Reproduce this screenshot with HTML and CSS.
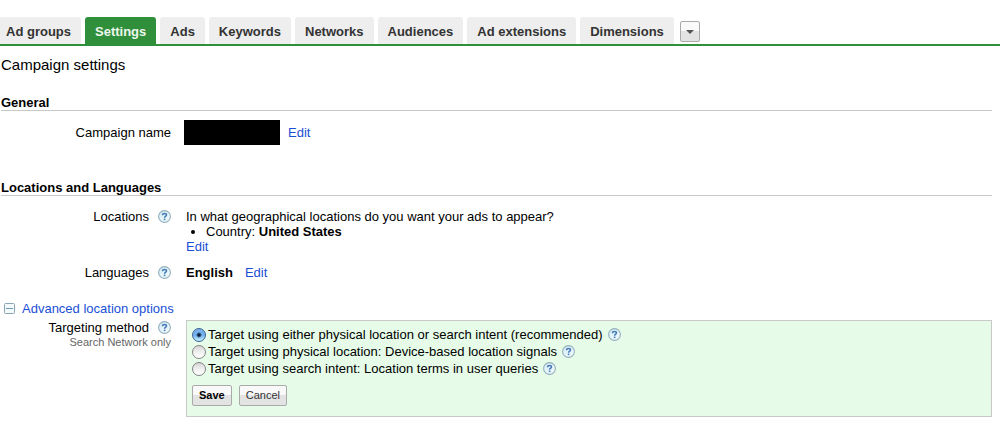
FILE: index.html
```html
<!DOCTYPE html>
<html lang="en">
<head>
<meta charset="utf-8">
<title>Campaign settings</title>
<link rel="stylesheet" href="styles.css">
</head>
<body>
<svg class="defs" aria-hidden="true">
  <defs>
    <linearGradient id="help-fill" x1="0" y1="0" x2="1" y2="1">
      <stop offset="0" stop-color="#d3edf6"/>
      <stop offset="1" stop-color="#f6fbfd"/>
    </linearGradient>
    <symbol id="help" viewBox="0 0 13 13">
      <circle cx="6.5" cy="6.5" r="5.9" fill="url(#help-fill)" stroke="#93afbb" stroke-width="1.1"/>
      <path d="M4.5 5.2C4.5 3.9 5.4 3.5 6.5 3.5S8.5 4 8.5 5C8.5 6.2 6.6 6.2 6.6 7.8" fill="none" stroke="#4679b8" stroke-width="1.5"/>
      <rect x="5.8" y="8.6" width="1.6" height="1.5" fill="#4679b8"/>
    </symbol>
  </defs>
</svg>
<nav class="tabs">
  <a class="tab tab-first" href="#">Ad groups</a>
  <a class="tab tab-active" href="#" aria-current="page">Settings</a>
  <a class="tab" href="#">Ads</a>
  <a class="tab" href="#">Keywords</a>
  <a class="tab" href="#">Networks</a>
  <a class="tab" href="#">Audiences</a>
  <a class="tab" href="#">Ad extensions</a>
  <a class="tab" href="#">Dimensions</a>
  <button class="btn more" type="button" aria-label="More tabs"><svg width="8" height="4" viewBox="0 0 8 4"><path d="M0 0H8L4 4Z" fill="#555"/></svg></button>
</nav>
<main class="page">
  <h1 class="title">Campaign settings</h1>

  <section class="general">
    <h2 class="heading">General</h2>
    <div class="row row-name">
      <div class="label">Campaign name</div>
      <div class="value value-name"><span class="redacted"></span><a class="link" href="#">Edit</a></div>
    </div>
  </section>

  <section>
    <h2 class="heading">Locations and Languages</h2>
    <div class="row row-locations">
      <div class="label">Locations <svg class="help"><use href="#help"/></svg></div>
      <div class="value">
        <p class="question">In what geographical locations do you want your ads to appear?</p>
        <ul class="places"><li>Country: <b>United States</b></li></ul>
        <a class="link" href="#">Edit</a>
      </div>
    </div>
    <div class="row row-languages">
      <div class="label">Languages <svg class="help"><use href="#help"/></svg></div>
      <div class="value value-inline"><b>English</b><a class="link" href="#">Edit</a></div>
    </div>
    <a class="link advanced" href="#"><svg width="11" height="11" viewBox="0 0 11 11"><rect x=".5" y=".5" width="10" height="10" rx="1" fill="#f4f9fb" stroke="#8aa5b4"/><path d="M2 5.5H9" stroke="#6b9cba"/></svg>Advanced location options</a>
    <div class="row">
      <div class="label-group">
        <div class="label">Targeting method <svg class="help"><use href="#help"/></svg></div>
        <div class="note">Search Network only</div>
      </div>
      <form class="panel">
        <div class="option"><input class="radio" type="radio" name="target" id="either" checked><label for="either">Target using either physical location or search intent (recommended)</label><svg class="help"><use href="#help"/></svg></div>
        <div class="option"><input class="radio" type="radio" name="target" id="physical"><label for="physical">Target using physical location: Device-based location signals</label><svg class="help"><use href="#help"/></svg></div>
        <div class="option"><input class="radio" type="radio" name="target" id="intent"><label for="intent">Target using search intent: Location terms in user queries</label><svg class="help"><use href="#help"/></svg></div>
        <div class="actions">
          <button class="btn save" type="button">Save</button>
          <button class="btn" type="button">Cancel</button>
        </div>
      </form>
    </div>
  </section>
</main>
</body>
</html>
```

FILE: styles.css
```css
* { box-sizing: border-box; }
body {
  margin: 0;
  background: #fff;
  color: #000;
  font: 13px/15px "Liberation Sans", Arial, sans-serif;
}
.defs { position: absolute; width: 0; height: 0; }
.tabs {
  display: flex;
  gap: 4px;
  padding-top: 17px;
  border-bottom: 2px solid #2f8f3a;
}
.tab {
  padding: 7px 10px 5px;
  border-radius: 3px 3px 0 0;
  background: #eee;
  color: #333;
  font-weight: bold;
  text-decoration: none;
  white-space: nowrap;
}
.tab-first { padding-left: 6px; border-top-left-radius: 0; }
.tab-active { background: #2f8f3a; color: #eef7ee; }
.btn {
  height: 21px;
  padding: 0 6px;
  border: 1px solid #aaa;
  border-radius: 2px;
  background: linear-gradient(#f9f9f9 45%, #e3e3e3 50%);
  color: #333;
  font: 11px/15px "Liberation Sans", Arial, sans-serif;
}
.more {
  display: flex;
  align-items: center;
  justify-content: center;
  width: 20px;
  margin: 4px 0 0 2px;
  padding: 0;
}
.page { padding: 10px 8px 15px 1px; }
.title { margin: 0 0 21px; font-size: 15px; line-height: 18px; font-weight: normal; }
.general { margin-bottom: 34px; }
.heading {
  margin: 0;
  border-bottom: 1px solid #c8c8c8;
  font-size: 13px;
  line-height: 15px;
}
.row {
  display: grid;
  grid-template-columns: 170px minmax(0, 1fr);
  column-gap: 15px;
  align-items: start;
}
.row-name { align-items: center; column-gap: 13px; padding: 9px 0 1px; }
.row-locations { padding-top: 13px; }
.row-languages { padding: 11px 0 21px; }
.label {
  display: flex;
  justify-content: flex-end;
  align-items: center;
  gap: 9px;
}
.help { flex: none; width: 13px; height: 13px; }
.value-name { display: flex; align-items: center; gap: 8px; }
.value-inline { display: flex; gap: 12px; }
.redacted { width: 96px; height: 25px; background: #000; }
.question { margin: 0; }
.places { margin: 0; padding-left: 20px; }
.link { color: #1a4fd6; text-decoration: none; }
.advanced { display: inline-flex; align-items: center; gap: 7px; padding-left: 3px; margin-bottom: 4px; vertical-align: top; }
.label-group { text-align: right; }
.note { color: #666; font-size: 11px; line-height: 15px; }
.panel {
  padding: 5px;
  border: 1px solid #c8c8c8;
  background: #e6fce8;
}
.option { display: flex; align-items: center; height: 17px; }
.option .help { margin-left: 5px; }
.radio {
  appearance: none;
  flex: none;
  width: 14px;
  height: 14px;
  margin: 0 2px 0 0;
  border: 1px solid #858585;
  border-radius: 50%;
  background: linear-gradient(#d4d4d4, #f0f0f0 50%, #fff);
}
.radio:checked {
  border-color: #3c5f94;
  background: radial-gradient(circle, #0b1d3c 1px, transparent 3px), linear-gradient(#7fb0e8, #6fb0ee 50%, #c8f0ff);
}
.actions { display: flex; gap: 7px; padding: 8px 0 5px; }
.save { color: #000; font-weight: bold; }
```
